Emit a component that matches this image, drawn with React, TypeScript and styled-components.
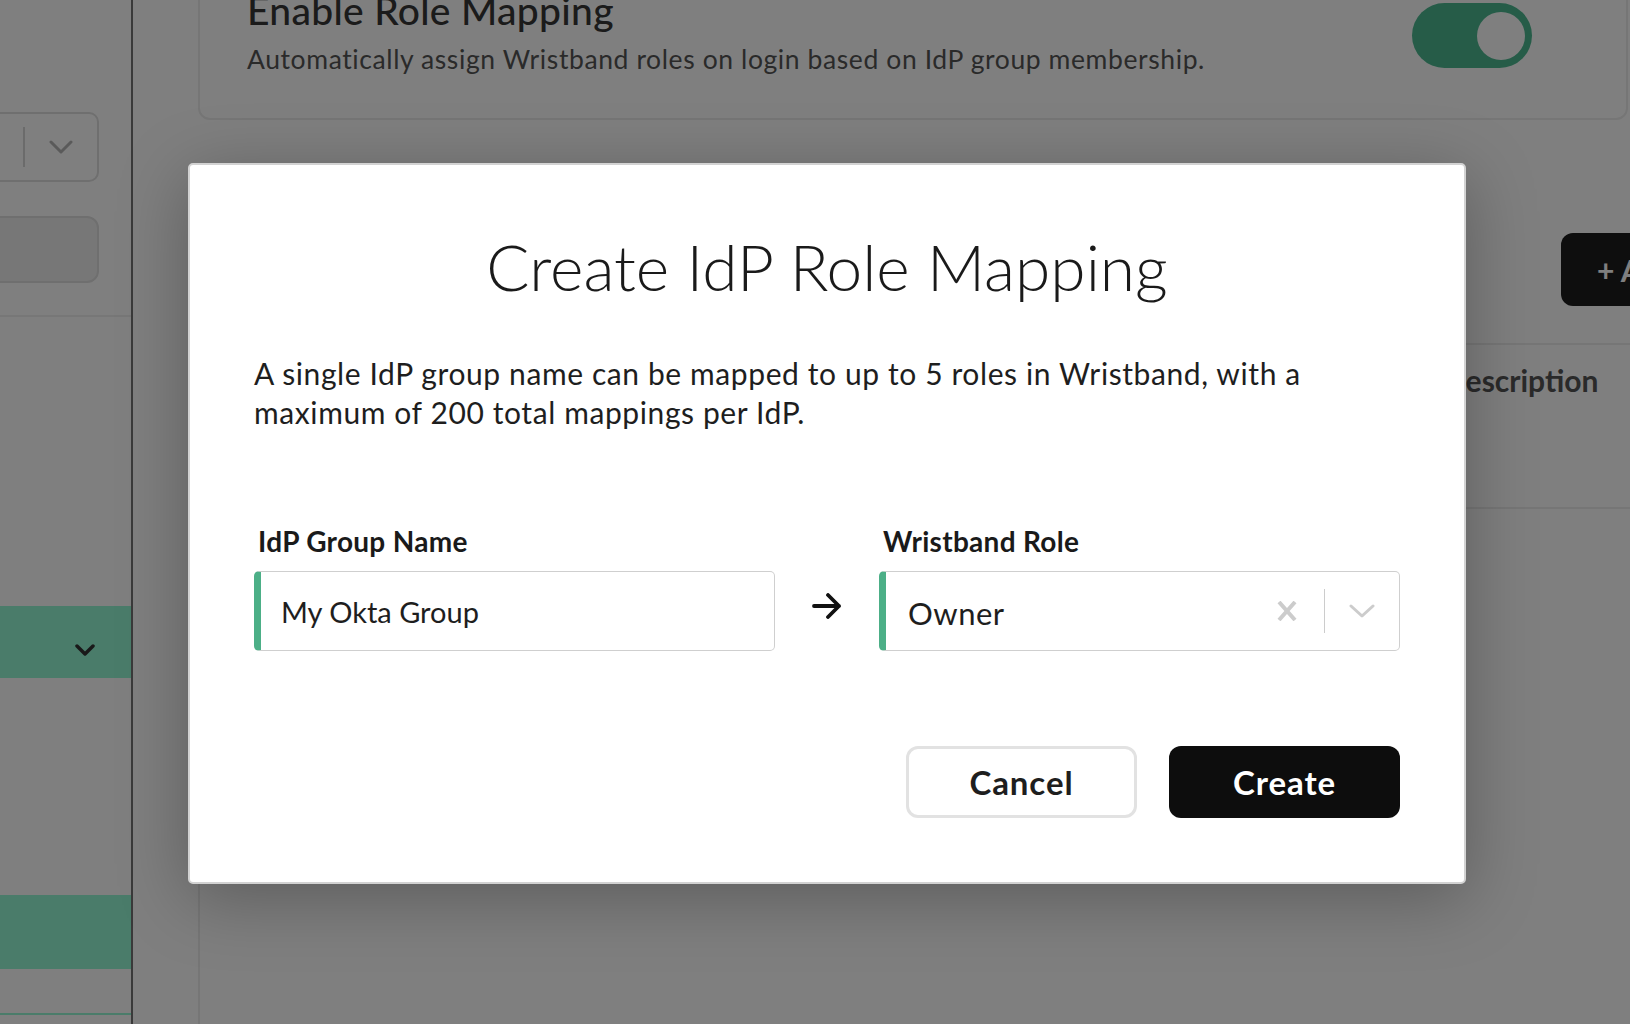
import React from "react";
import styled, { createGlobalStyle } from "styled-components";

const GlobalStyle = createGlobalStyle`
  html, body {
    margin: 0;
    padding: 0;
  }
  body {
    font-family: Lato, "Open Sans", Arial, sans-serif;
    background: #ffffff;
    overflow: hidden;
  }
  * {
    box-sizing: border-box;
  }
`;

const Page = styled.div`
  position: relative;
  display: flex;
  width: 1630px;
  height: 1024px;
  overflow: hidden;
  background: #ffffff;
`;

/* ---------- sidebar (under the overlay) ---------- */

const Sidebar = styled.aside`
  flex: 0 0 133px;
  display: flex;
  flex-direction: column;
  padding-top: 112px;
  border-right: 2px solid #747474;
  overflow: hidden;
`;

const SidebarSelect = styled.div`
  display: flex;
  align-items: center;
  justify-content: flex-end;
  gap: 24px;
  width: 139px;
  height: 70px;
  margin-left: -40px;
  padding-right: 24px;
  border: 2px solid #dedede;
  border-radius: 10px;
`;

const SidebarSelectBar = styled.span`
  width: 2px;
  height: 40px;
  background: #d6d6d6;
`;

const SidebarButton = styled.div`
  width: 139px;
  height: 67px;
  margin: 34px 0 0 -40px;
  background: #efefef;
  border: 2px solid #dedede;
  border-radius: 12px;
`;

const SidebarDivider = styled.div`
  height: 2px;
  margin-top: 32px;
  background: #eeeeee;
`;

const NavItem = styled.div<{ $gap: number; $height: number }>`
  display: flex;
  align-items: center;
  justify-content: flex-end;
  height: ${(p) => p.$height}px;
  margin-top: ${(p) => p.$gap}px;
  padding: 16px 36px 0 0;
  background: #94f8d4;
`;

const NavLine = styled.div`
  height: 2px;
  margin-top: 44px;
  background: #94f8d4;
`;

/* ---------- main content (under the overlay) ---------- */

const Main = styled.main`
  flex: 1;
  min-width: 0;
  display: flex;
  flex-direction: column;
  padding-left: 65px;
`;

const SettingCard = styled.section`
  display: flex;
  justify-content: space-between;
  align-items: flex-start;
  width: 1430px;
  height: 160px;
  margin-top: -40px;
  padding: 25px 94px 0 47px;
  border: 2px solid #ececec;
  border-radius: 12px;
`;

const SettingText = styled.div`
  display: flex;
  flex-direction: column;
`;

const SettingTitle = styled.h3`
  margin: 0;
  font-size: 39px;
  font-weight: 500;
  letter-spacing: 0.3px;
  line-height: 1.2;
  color: #363636;
`;

const SettingHint = styled.p`
  margin: 10px 0 0;
  font-size: 26.5px;
  letter-spacing: 0.6px;
  line-height: 1.2;
  color: #555555;
`;

const Toggle = styled.div`
  display: flex;
  align-items: center;
  justify-content: flex-end;
  width: 120px;
  height: 65px;
  margin-top: 16px;
  padding-right: 7px;
  background: #4cb890;
  border-radius: 33px;
`;

const ToggleKnob = styled.span`
  width: 48px;
  height: 48px;
  border-radius: 50%;
  background: #ffffff;
`;

const ActionsRow = styled.div`
  display: flex;
  justify-content: flex-end;
  margin: 113px -211px 0 0;
`;

const AddButton = styled.div`
  display: flex;
  align-items: center;
  width: 280px;
  height: 73px;
  padding-left: 36px;
  background: #1c1c1c;
  border-radius: 12px;
  color: #ffffff;
  font-size: 30px;
  font-weight: 700;
`;

const TableCard = styled.div`
  flex: 1;
  margin: 37px -211px -40px 0;
  border: 2px solid #ececec;
  border-radius: 12px;
`;

const TableHead = styled.div`
  display: grid;
  grid-template-columns: 620px 603px 1fr;
  height: 164px;
  padding: 17px 0 0 20px;
  border-bottom: 2px solid #ececec;
  font-size: 30px;
  font-weight: 700;
  line-height: 1.2;
  color: #555555;
`;

/* ---------- modal ---------- */

const Overlay = styled.div`
  position: absolute;
  inset: 0;
  display: flex;
  justify-content: center;
  align-items: flex-start;
  padding: 163px 0 0 24px;
  background: rgba(0, 0, 0, 0.5);
`;

const Modal = styled.div`
  display: flex;
  flex-direction: column;
  width: 1278px;
  padding: 64px;
  background: #ffffff;
  border: 2px solid #d2d2d2;
  border-radius: 5px;
  box-shadow: 0 14px 70px rgba(0, 0, 0, 0.28);
`;

const ModalTitle = styled.h2`
  margin: 0;
  font-size: 64px;
  font-weight: 300;
  line-height: 1.2;
  text-align: center;
  color: #1a1a1a;
`;

const ModalText = styled.p`
  margin: 48px 0 0;
  font-size: 30px;
  letter-spacing: 0.6px;
  line-height: 39.2px;
  color: #1e1e1e;
`;

const FieldGrid = styled.div`
  display: grid;
  grid-template-columns: 1fr 104px 1fr;
  row-gap: 14px;
  margin-top: 93px;
`;

const FieldLabel = styled.label`
  padding-left: 4px;
  font-size: 28px;
  font-weight: 700;
  letter-spacing: 0.3px;
  line-height: 32px;
  color: #1a1a1a;
`;

const FieldBox = styled.div<{ $size?: number }>`
  display: flex;
  align-items: center;
  height: 80px;
  padding: 0 24px 0 20px;
  border: 1px solid #cfcfcf;
  border-left: 7px solid #4caf87;
  border-radius: 5px;
  font-size: ${(p) => p.$size ?? 29}px;
  color: #1e1e1e;
`;

const SelectValue = styled.span`
  flex: 1;
  padding: 3px 0 0 2px;
  letter-spacing: 0.5px;
`;

const IndicatorBar = styled.span`
  width: 1px;
  height: 44px;
  margin: 0 24px 0 27px;
  background: #cccccc;
`;

const ArrowCell = styled.div`
  display: flex;
  align-items: center;
  justify-content: center;
  padding-bottom: 10px;
`;

const ButtonRow = styled.div`
  display: flex;
  justify-content: flex-end;
  gap: 32px;
  margin-top: 95px;
`;

const Button = styled.button<{ $primary?: boolean }>`
  width: 231px;
  height: 72px;
  border-radius: 12px;
  border: ${(p) => (p.$primary ? "none" : "3px solid #e2e2e2")};
  background: ${(p) => (p.$primary ? "#0d0d0d" : "#ffffff")};
  color: ${(p) => (p.$primary ? "#ffffff" : "#1e1e1e")};
  font-family: Lato, "Open Sans", Arial, sans-serif;
  font-size: 33px;
  font-weight: 700;
  letter-spacing: 0.9px;
  cursor: pointer;
`;

const Chevron = ({ color, w = 24, h = 13, sw = 3 }: { color: string; w?: number; h?: number; sw?: number }) => (
  <svg width={w} height={h} viewBox={`0 0 ${w} ${h}`} fill="none">
    <polyline
      points={`2,2 ${w / 2},${h - 2} ${w - 2},2`}
      stroke={color}
      strokeWidth={sw}
      strokeLinecap="round"
      strokeLinejoin="round"
    />
  </svg>
);

const ClearIcon = () => (
  <svg width="20" height="20" viewBox="0 0 20 20" fill="none">
    <path d="M2 1 L18 19 M18 1 L2 19" stroke="#cccccc" strokeWidth="4" />
  </svg>
);

const ArrowIcon = () => (
  <svg width="30" height="26" viewBox="0 0 30 26" fill="none">
    <path
      d="M2 13 H27 M16 2 L27 13 L16 24"
      stroke="#111111"
      strokeWidth="3.8"
      strokeLinecap="round"
      strokeLinejoin="round"
    />
  </svg>
);

export default function App() {
  return (
    <>
      <GlobalStyle />
      <Page>
        <Sidebar>
          <SidebarSelect>
            <SidebarSelectBar />
            <Chevron color="#b5b5b5" w={24} h={14} sw={3} />
          </SidebarSelect>
          <SidebarButton />
          <SidebarDivider />
          <NavItem $gap={289} $height={72}>
            <Chevron color="#333333" w={20} h={12} sw={3.5} />
          </NavItem>
          <NavItem $gap={217} $height={74} />
          <NavLine />
        </Sidebar>

        <Main>
          <SettingCard>
            <SettingText>
              <SettingTitle>Enable Role Mapping</SettingTitle>
              <SettingHint>
                Automatically assign Wristband roles on login based on IdP group membership.
              </SettingHint>
            </SettingText>
            <Toggle>
              <ToggleKnob />
            </Toggle>
          </SettingCard>

          <ActionsRow>
            <AddButton>+ Add Mapping</AddButton>
          </ActionsRow>

          <TableCard>
            <TableHead>
              <span>IdP Group Name</span>
              <span>Wristband Role</span>
              <span>Description</span>
            </TableHead>
          </TableCard>
        </Main>

        <Overlay>
          <Modal>
            <ModalTitle>Create IdP Role Mapping</ModalTitle>
            <ModalText>
              A single IdP group name can be mapped to up to 5 roles in Wristband, with a maximum of 200
              total mappings per IdP.
            </ModalText>

            <FieldGrid>
              <FieldLabel>IdP Group Name</FieldLabel>
              <span />
              <FieldLabel>Wristband Role</FieldLabel>

              <FieldBox>My Okta Group</FieldBox>
              <ArrowCell>
                <ArrowIcon />
              </ArrowCell>
              <FieldBox $size={31}>
                <SelectValue>Owner</SelectValue>
                <ClearIcon />
                <IndicatorBar />
                <Chevron color="#cccccc" w={26} h={14} sw={3} />
              </FieldBox>
            </FieldGrid>

            <ButtonRow>
              <Button>Cancel</Button>
              <Button $primary>Create</Button>
            </ButtonRow>
          </Modal>
        </Overlay>
      </Page>
    </>
  );
}
